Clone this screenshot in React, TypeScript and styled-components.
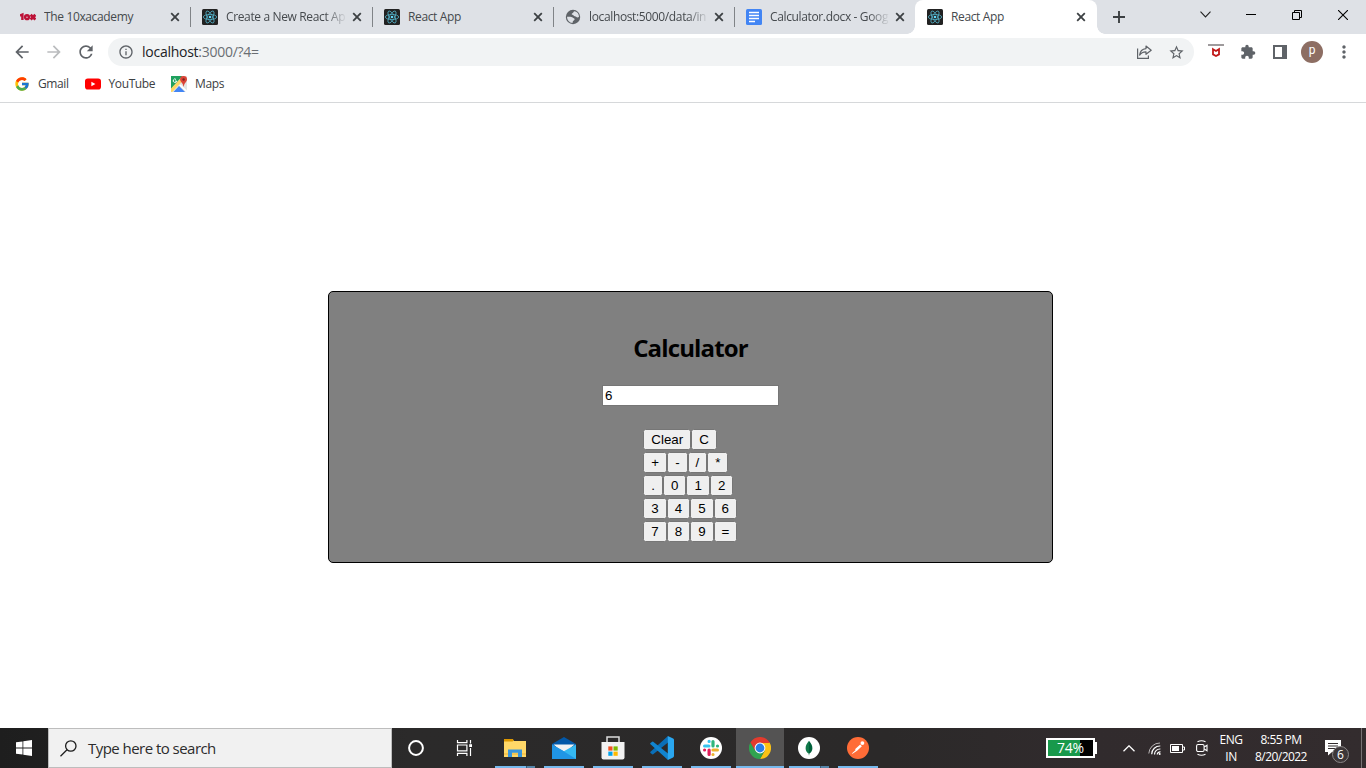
import React from "react";
import styled, { createGlobalStyle } from "styled-components";
import {
  MdArrowBack,
  MdArrowForward,
  MdRefresh,
  MdInfoOutline,
  MdStarBorder,
  MdExtension,
  MdMoreVert,
} from "react-icons/md";
import { FcGoogle } from "react-icons/fc";

const GlobalStyle = createGlobalStyle`
  * { box-sizing: border-box; }
  body {
    margin: 0;
    background: #fff;
    font-family: "Open Sans", "Noto Sans", sans-serif;
    overflow: hidden;
  }
  svg { display: block; flex: none; }
`;

const Screen = styled.div`
  width: 1366px;
  height: 768px;
  display: flex;
  flex-direction: column;
  background: #fff;
`;

/* ---------- browser chrome ---------- */

const TabStrip = styled.div`
  height: 34px;
  display: flex;
  background: #dee1e6;
  padding-left: 9px;
`;

const TabBox = styled.div<{ $width: number; $active?: boolean; $divider?: boolean }>`
  position: relative;
  width: ${(p) => p.$width}px;
  height: 34px;
  display: flex;
  align-items: center;
  margin-left: ${(p) => (p.$active ? -1 : 0)}px;
  padding: 0 11px 0 ${(p) => (p.$active ? 12 : 11)}px;
  background: ${(p) => (p.$active ? "#fff" : "transparent")};
  border-radius: 8px 8px 0 0;
  &::after {
    content: "";
    display: ${(p) => (p.$divider ? "block" : "none")};
    position: absolute;
    right: 0;
    top: 7px;
    width: 1px;
    height: 20px;
    background: #808387;
  }
`;

const TabFoot = styled.i<{ $side: "left" | "right" }>`
  position: absolute;
  bottom: 0;
  ${(p) => p.$side}: -8px;
  width: 8px;
  height: 8px;
  background: radial-gradient(
    circle at ${(p) => (p.$side === "left" ? "0 0" : "100% 0")},
    transparent 7.5px,
    #fff 8px
  );
`;

const TabTitle = styled.span<{ $fade?: boolean }>`
  flex: 1;
  margin: 0 5px 0 8px;
  overflow: hidden;
  white-space: nowrap;
  font-size: 12px;
  line-height: 18px;
  letter-spacing: -0.36px;
  color: #45494d;
  ${(p) => p.$fade && "mask-image: linear-gradient(90deg, #000 82%, transparent 100%);"}
`;

const NewTab = styled.div`
  width: 44px;
  display: flex;
  align-items: center;
  justify-content: center;
`;

const WindowControls = styled.div`
  margin-left: auto;
  height: 29px;
  display: flex;
`;

const ControlButton = styled.div`
  width: 46px;
  display: flex;
  align-items: center;
  justify-content: center;
`;

const Toolbar = styled.div`
  height: 36px;
  display: flex;
  align-items: center;
  padding-left: 6px;
`;

const ToolSlot = styled.div`
  width: 32px;
  display: flex;
  justify-content: center;
`;

const AddressBar = styled.div`
  width: 1086px;
  height: 28px;
  margin: 0 6px;
  display: flex;
  align-items: center;
  padding: 0 2px 0 10px;
  border-radius: 14px;
  background: #f1f3f4;
`;

const Url = styled.span`
  flex: 1;
  margin-left: 8px;
  font-size: 14px;
  line-height: 20px;
  letter-spacing: -0.26px;
  color: #6a6e73;
  b {
    font-weight: 400;
    color: #202124;
  }
`;

const Avatar = styled.div`
  width: 22px;
  height: 22px;
  border-radius: 50%;
  background: #8d6e63;
  color: #fff;
  font: 400 12px/19px Roboto, sans-serif;
  text-align: center;
`;

const BookmarkBar = styled.div`
  height: 33px;
  display: flex;
  align-items: center;
  padding: 0 14px 5px;
  gap: 16px;
  border-bottom: 1px solid #d6d8da;
`;

const Bookmark = styled.div`
  display: flex;
  align-items: center;
  gap: 8px;
  font-size: 12px;
  line-height: 18px;
  letter-spacing: -0.4px;
  color: #3c4043;
`;

/* ---------- calculator page ---------- */

const Page = styled.main`
  flex: 1;
  padding: 188px 0 0 328px;
`;

const Calculator = styled.section`
  width: 725px;
  height: 272px;
  border: 1px solid #000;
  border-radius: 5px;
  background: #808080;
  display: flex;
  flex-direction: column;
  align-items: center;
`;

const Heading = styled.h1`
  margin: 40px 0 21px;
  font-size: 24px;
  line-height: 32px;
  letter-spacing: -0.85px;
  font-weight: 700;
  color: #000;
`;

const Display = styled.input`
  width: 177px;
  height: 21px;
  margin: 0 0 23px;
  padding: 1px 2px;
  border: 1px solid #767676;
  background: #fff;
  color: #000;
  font: 13.333px "Liberation Sans", Arial, sans-serif;
`;

const Keypad = styled.div`
  width: 94.3px;
  display: flex;
  flex-direction: column;
  gap: 2px;
`;

const KeyRow = styled.div`
  display: flex;
`;

const Key = styled.button`
  height: 21px;
  font: 13.333px "Liberation Sans", Arial, sans-serif;
  color: #000;
`;

/* ---------- taskbar ---------- */

const Taskbar = styled.footer`
  height: 40px;
  display: flex;
  background: linear-gradient(90deg, #1e1e1e 0, #2b2a2a 30%, #2b2929 65%, #312b2d 80%, #332c2e 100%);
`;

const StartButton = styled.div`
  width: 48px;
  display: flex;
  align-items: center;
  justify-content: center;
`;

const SearchBox = styled.div`
  width: 344px;
  display: flex;
  align-items: center;
  padding-left: 11px;
  gap: 11px;
  border: 1px solid #bdbdbd;
  background: #f1f1f1;
  color: #2c2c2c;
  font-size: 15px;
  letter-spacing: -0.54px;
`;

const AppRow = styled.div`
  display: flex;
  & > :nth-child(3) {
    margin-left: 3px;
  }
`;

const AppSlot = styled.div<{ $active?: boolean; $gap?: boolean }>`
  width: 48px;
  margin-left: ${(p) => (p.$gap ? 1 : 0)}px;
  height: 40px;
  padding-top: 2px;
  display: flex;
  flex-direction: column;
  align-items: center;
  background: ${(p) => (p.$active ? "#545353" : "transparent")};
`;

const AppIcon = styled.div`
  flex: 1;
  display: flex;
  align-items: center;
`;

const Underline = styled.div<{ $kind: "none" | "single" | "multi" | "full" }>`
  height: 2px;
  width: ${(p) => (p.$kind === "full" ? 48 : 40)}px;
  background: ${(p) =>
    p.$kind === "none"
      ? "transparent"
      : p.$kind === "multi"
      ? "linear-gradient(90deg, #76b9ed 0 31px, #3c5c76 31px 32px, #5585a9 32px)"
      : "#76b9ed"};
`;

const Tray = styled.div`
  margin-left: auto;
  display: flex;
  align-items: center;
  color: #fff;
`;

const BatteryMeter = styled.div`
  width: 49px;
  height: 20px;
  border: 2px solid #fff;
  background: linear-gradient(90deg, #18994b 0 32px, #000 32px);
  font-size: 14px;
  line-height: 16px;
  letter-spacing: -0.2px;
  text-align: center;
`;

const BatteryTip = styled.div`
  width: 2px;
  height: 12px;
  background: #fff;
`;

const TrayIcon = styled.div<{ $left: number }>`
  margin-left: ${(p) => p.$left}px;
`;

const TrayText = styled.div<{ $width: number; $left: number; $spacing: number }>`
  width: ${(p) => p.$width}px;
  margin-left: ${(p) => p.$left}px;
  text-align: center;
  white-space: nowrap;
  font-size: 12px;
  line-height: 17px;
  letter-spacing: ${(p) => p.$spacing}px;
  padding-bottom: 1px;
`;

const Notification = styled.div`
  position: relative;
  width: 26px;
  height: 40px;
  margin-left: 17px;
  padding-top: 12px;
`;

const Badge = styled.span`
  position: absolute;
  left: 7px;
  top: 18px;
  width: 17px;
  height: 17px;
  border: 1px solid #8b8788;
  border-radius: 50%;
  background: #3d3739;
  font-size: 12px;
  line-height: 15px;
  text-align: center;
`;

const DesktopEdge = styled.div`
  width: 5px;
  height: 40px;
  margin-left: 10px;
  border-left: 1px solid #777274;
`;

/* ---------- icons ---------- */

const CloseIcon = () => (
  <svg width="10" height="10" viewBox="0 0 10 10">
    <path d="M1.2 1.2 8.8 8.8M8.8 1.2 1.2 8.8" stroke="#3c4043" strokeWidth="1.8" />
  </svg>
);

const ReactIcon = () => (
  <svg width="16" height="16" viewBox="0 0 32 32">
    <rect width="32" height="32" rx="3" fill="#222222" />
    <g fill="none" stroke="#50a9be" strokeWidth="1.7">
      <ellipse cx="16" cy="16" rx="13.4" ry="5.2" />
      <ellipse cx="16" cy="16" rx="13.4" ry="5.2" transform="rotate(60 16 16)" />
      <ellipse cx="16" cy="16" rx="13.4" ry="5.2" transform="rotate(120 16 16)" />
    </g>
    <circle cx="16" cy="16" r="2.6" fill="#61dafb" />
  </svg>
);

const GlobeIcon = () => (
  <svg width="16" height="16" viewBox="0 0 16 16">
    <circle cx="8" cy="8" r="7.2" fill="#5f6368" />
    <path
      d="M9.6 2.2C8.3 2.5 8.6 3.7 7.4 4.2 6.4 4.6 6.5 5.6 7.4 5.7 8.6 5.8 8.6 7.2 9.8 7.3 11 7.3 11.4 8.4 12.4 8.5L14 8A6 6 0 0 0 9.6 2.2"
      fill="#dee1e6"
    />
    <path
      d="M2 7.8C4 7.6 6.8 7.5 7.6 8.6 8.2 9.5 9.8 9.3 9.6 10.5 9.4 11.6 8 11.4 7.8 12.6L7.5 14A6 6 0 0 1 2 7.8"
      fill="#dee1e6"
    />
  </svg>
);

const AcademyIcon = () => (
  <svg width="16" height="16" viewBox="0 0 16 16" fill="none" stroke="#bd1238">
    <path d="M0 6.6 2.4 5.6V11" strokeWidth="2.4" />
    <circle cx="7" cy="8.2" r="1.9" strokeWidth="2.4" />
    <path d="M10.6 5.8 15.4 10.6M15.4 5.8 10.6 10.6" strokeWidth="2.8" />
  </svg>
);

const DocsIcon = () => (
  <svg width="16" height="16" viewBox="0 0 16 16">
    <rect width="16" height="16" rx="1.5" fill="#4285f4" />
    <path d="M3 4h10M3 7h10M3 10h10M3 13h6" transform="translate(0 -.5)" stroke="#fff" strokeWidth="1.5" />
  </svg>
);

const ShareIcon = () => (
  <svg width="16" height="16" viewBox="0 0 16 16" fill="none" stroke="#5f6368" strokeWidth="1.2">
    <path d="M1.6 4.5V14.4H12.4V11.5" />
    <path d="M10 2 15.2 6.2 10 10.3V7.8C7.2 7.7 5.1 8.7 3.6 11.1 4 7.6 6.1 5 10 4.6Z" strokeLinejoin="round" />
  </svg>
);

const McAfeeIcon = () => (
  <svg width="16" height="16" viewBox="0 0 16 16">
    <path d="M0 1h16" stroke="#9e9a9c" strokeWidth="2" />
    <path d="M5 5.2 8 7 11 5.2V10.4L8 12 5 10.4Z" fill="none" stroke="#c01818" strokeWidth="1.8" />
  </svg>
);

const SidePanelIcon = () => (
  <svg width="14" height="14" viewBox="0 0 14 14">
    <rect x="1" y="1" width="12" height="12" fill="none" stroke="#5f6368" strokeWidth="2" />
    <path d="M9 0h5v14H9z" fill="#5f6368" />
  </svg>
);

const YouTubeIcon = () => (
  <svg width="16" height="16" viewBox="0 0 16 16">
    <rect y="2.4" width="16" height="11.2" rx="2.8" fill="#f00" />
    <path d="M6.4 5.7v4.6L10.4 8z" fill="#fff" />
  </svg>
);

const MapsIcon = () => (
  <svg width="16" height="16" viewBox="0 0 16 16">
    <rect width="16" height="16" rx="1" fill="#e3e5e3" />
    <path d="M0 0h11.5L0 13z" fill="#1fa15e" />
    <path d="M2.5 16 8 10l6 6z" fill="#4285f4" />
    <path d="M11 1 0 12.5V16h1.2L12.5 4z" fill="#fdd663" />
    <path d="M8.3 9.6 15 16h1v-1.6L9.6 8.4z" fill="#fff" />
    <path d="M5 3.4A1.7 1.7 0 1 0 5.6 5H4.2" fill="none" stroke="#fff" />
    <path d="M12.6 0a3.4 3.4 0 0 0-3.5 3.5C9.1 6 12 6.6 12.4 10.5h.4C13.3 6.6 16 6 16 3.5A3.4 3.4 0 0 0 12.6 0" fill="#db4437" />
    <circle cx="12.6" cy="3.5" r="1.2" fill="#7b231e" />
  </svg>
);

const WindowsIcon = () => (
  <svg width="16" height="16" viewBox="0 0 16 16" fill="#fff">
    <path d="M0 2.3 6.5 1.4V7.5H0zM7.3 1.3 16 0v7.5H7.3zM0 8.4h6.5v6.2L0 13.7zM7.3 8.4H16V16l-8.7-1.3z" />
  </svg>
);

const SearchIcon = () => (
  <svg width="17" height="17" viewBox="0 0 17 17" fill="none" stroke="#1d1d1d" strokeWidth="1.3">
    <circle cx="10.8" cy="6" r="5.2" />
    <path d="M7 9.7.5 16.2" />
  </svg>
);

const CortanaIcon = () => (
  <svg width="16" height="16" viewBox="0 0 16 16">
    <circle cx="8" cy="8" r="6.9" fill="none" stroke="#fff" strokeWidth="2" />
  </svg>
);

const TaskViewIcon = () => (
  <svg width="17" height="16" viewBox="0 0 17 16" fill="none" stroke="#fff" strokeWidth="1.2">
    <path d="M1.5 0v2.6h9.4V0M1.5 16v-2.6h9.4V16M1.5 5h9.4v5.8H1.5zM14.5 0v3.5M14.5 8v8" />
    <path d="M13.2 4.2h2.8v2.8h-2.8z" fill="#fff" stroke="none" />
  </svg>
);

const ExplorerIcon = () => (
  <svg width="22" height="18" viewBox="0 0 22 18">
    <path d="M0 0h8.5l1.4 2H22v16H0z" fill="#ffd868" />
    <path d="M0 0h8.5l1.4 1.3L8.5 2.6H0z" fill="#dd9700" />
    <path d="M0 14h22v2H0z" fill="#f7c64f" />
    <path d="M4 18v-7.5h14V18h-4v-4.2H8V18z" fill="#3a96dc" />
  </svg>
);

const MailIcon = () => (
  <svg width="24" height="22" viewBox="0 0 24 22">
    <path d="M12 0 0 7v2h24V7z" fill="#0358a8" />
    <path d="M1.5 7.4h21L13 16h-2z" fill="#f3f3f3" />
    <path d="M0 7.5 12 14.3V22H0z" fill="#2095e5" />
    <path d="M24 7.5V22H0l9.5-6.5z" fill="#35b8f1" />
    <path d="m0 7.5 12 7L24 22H0z" fill="#2095e5" />
  </svg>
);

const StoreIcon = () => (
  <svg width="24" height="24" viewBox="0 0 24 24">
    <path d="M6 7V1h12v6" fill="none" stroke="#ddd" strokeWidth="1.5" />
    <path d="M0.5 6h23v15.5q0 2-2 2h-19q-2 0-2-2z" fill="#f2f2f2" />
    <path d="M7.3 10.4h4.2v4.2H7.3z" fill="#f25022" />
    <path d="M12.5 10.4h4.2v4.2h-4.2z" fill="#7fba00" />
    <path d="M7.3 15.6h4.2v4.2H7.3z" fill="#00a4ef" />
    <path d="M12.5 15.6h4.2v4.2h-4.2z" fill="#ffb900" />
  </svg>
);

const VsCodeIcon = () => (
  <svg width="24" height="24" viewBox="0 0 24 24">
    <path d="M0.5 15.8 18 0v6.5L3.2 18.2q-.7.5-1.3-.1l-1.4-1.2q-.6-.6 0-1.1" fill="#0a6fb8" />
    <path d="M.5 8.2 18 24v-6.5L3.2 5.8q-.7-.5-1.3.1L.5 7.1q-.6.6 0 1.1" fill="#1184cf" />
    <path d="m17.8 0 5.3 2.5q.9.5.9 1.4v16.2q0 .9-.9 1.4L17.8 24z" fill="#2aa7f0" />
  </svg>
);

const SlackIcon = () => (
  <svg width="22" height="22" viewBox="0 0 22 22" fill="none" strokeWidth="3.2" strokeLinecap="round">
    <circle cx="11" cy="11" r="11" fill="#fff" />
    <path d="M9.1 4.4h0M4.6 9h4.3" stroke="#36c5f0" />
    <path d="M17.5 9h0M13 4.5v4.4" stroke="#2eb67d" />
    <path d="M13 17.5h0M13 13h4.4" stroke="#ecb22e" />
    <path d="M4.6 13h0M9.1 13v4.5" stroke="#e01e5a" />
  </svg>
);

const ChromeIcon = () => (
  <svg width="22" height="22" viewBox="0 0 22 22">
    <path d="M20.53 5.5A11 11 0 0 1 11 22L15.8 13.5 11 5.5Z" fill="#fbc116" />
    <path d="M1.47 5.5A11 11 0 0 0 11 22L15.6 13.8 11 11 6.3 13.7Z" fill="#30a350" />
    <path d="M1.47 5.5A11 11 0 0 1 20.53 5.5V6H11L6.3 13.7Z" fill="#e33b2e" />
    <circle cx="11" cy="11" r="5.4" fill="#fff" />
    <circle cx="11" cy="11" r="4.4" fill="#2a7de9" />
  </svg>
);

const MongoIcon = () => (
  <svg width="22" height="22" viewBox="0 0 22 22">
    <circle cx="11" cy="11" r="11" fill="#fff" />
    <path d="M11 3.8C8.8 6.8 7.6 8.5 7.6 11.2c0 2.6 1.4 4.3 3 5.4l.4 2.1z" fill="#10794a" />
    <path d="M11 3.8c2.2 3 3.4 4.7 3.4 7.4 0 2.6-1.4 4.3-3 5.4l-.4 2.1z" fill="#00613b" />
  </svg>
);

const PostmanIcon = () => (
  <svg width="22" height="22" viewBox="0 0 22 22">
    <circle cx="11" cy="11" r="11" fill="#ff6c37" />
    <circle cx="15.4" cy="6.1" r="1.9" fill="#fff" />
    <path d="m13.2 7.5 1.7 1.7-4.8 4.6-4.6 3-.7-.2 3.9-3.5-.7-.8z" fill="#fff" />
  </svg>
);

const WifiIcon = () => (
  <svg width="13" height="13" viewBox="0 0 13 13" fill="none" stroke="#fff">
    <path d="M.8 11.5A11 11 0 0 1 12 1" stroke="#b9b5b6" />
    <path d="M3.7 12.2A8.3 8.3 0 0 1 12.3 4M6.5 12.4A5.5 5.5 0 0 1 12.4 7M9.2 12.5A3 3 0 0 1 12.5 9.8" strokeWidth="1.2" />
    <circle cx="11.7" cy="12" r="1" fill="#fff" stroke="none" />
  </svg>
);

const BatteryIcon = () => (
  <svg width="15" height="9" viewBox="0 0 15 9">
    <path d="M.5.5h12v8H.5zM13 3h1.5v3H13" fill="none" stroke="#fff" />
    <path d="M2 2h7v5H2z" fill="#fff" />
  </svg>
);

const MeetIcon = () => (
  <svg width="12" height="16" viewBox="0 0 12 16" fill="none" stroke="#fff" strokeWidth="1.1">
    <rect x=".6" y="4.5" width="7.5" height="7" rx="1.5" />
    <path d="M8.2 7 11 5.3v5.4L8.2 9M1.5 1.8q4-2 8 0M1.5 14.2q4 2 8 0" />
  </svg>
);

/* ---------- data ---------- */

const tabs = [
  { title: "The 10xacademy", icon: <AcademyIcon />, width: 182 },
  { title: "Create a New React Ap", icon: <ReactIcon />, width: 182, fade: true },
  { title: "React App", icon: <ReactIcon />, width: 181 },
  { title: "localhost:5000/data/in", icon: <GlobeIcon />, width: 181, fade: true },
  { title: "Calculator.docx - Goog", icon: <DocsIcon />, width: 181, fade: true },
  { title: "React App", icon: <ReactIcon />, width: 182 },
];

const keyRows = [
  ["Clear", "C"],
  ["+", "-", "/", "*"],
  [".", "0", "1", "2"],
  ["3", "4", "5", "6"],
  ["7", "8", "9", "="],
];

type AppEntry = { icon: React.ReactNode; line: "none" | "single" | "multi" | "full" };

const apps: AppEntry[] = [
  { icon: <CortanaIcon />, line: "none" },
  { icon: <TaskViewIcon />, line: "none" },
  { icon: <ExplorerIcon />, line: "multi" },
  { icon: <MailIcon />, line: "single" },
  { icon: <StoreIcon />, line: "single" },
  { icon: <VsCodeIcon />, line: "single" },
  { icon: <SlackIcon />, line: "single" },
  { icon: <ChromeIcon />, line: "full" },
  { icon: <MongoIcon />, line: "multi" },
  { icon: <PostmanIcon />, line: "single" },
];

export default function App() {
  return (
    <Screen>
      <GlobalStyle />
      <TabStrip>
        {tabs.map((tab, i) => {
          const active = i === tabs.length - 1;
          return (
            <TabBox key={i} $width={tab.width} $active={active} $divider={i < tabs.length - 2}>
              {active && <TabFoot $side="left" />}
              {tab.icon}
              <TabTitle $fade={tab.fade}>{tab.title}</TabTitle>
              <CloseIcon />
              {active && <TabFoot $side="right" />}
            </TabBox>
          );
        })}
        <NewTab>
          <svg width="12" height="12" viewBox="0 0 12 12">
            <path d="M6 0v12M0 6h12" stroke="#3c4043" strokeWidth="1.9" />
          </svg>
        </NewTab>
        <WindowControls>
          <ControlButton>
            <svg width="11" height="7" viewBox="0 0 11 7">
              <path d="M.5.7 5.5 5.9 10.5.7" fill="none" stroke="#222" strokeWidth="1.1" />
            </svg>
          </ControlButton>
          <ControlButton>
            <svg width="10" height="1" viewBox="0 0 10 1">
              <path d="M0 0h10v1H0z" fill="#000" />
            </svg>
          </ControlButton>
          <ControlButton>
            <svg width="10" height="10" viewBox="0 0 10 10">
              <path d="M.5 2.5h7v7h-7zM2.5 2.5v-2h7v7h-2" fill="none" stroke="#000" />
            </svg>
          </ControlButton>
          <ControlButton>
            <svg width="10" height="10" viewBox="0 0 10 10">
              <path d="M0 0 10 10M10 0 0 10" stroke="#000" strokeWidth="1.1" />
            </svg>
          </ControlButton>
        </WindowControls>
      </TabStrip>

      <Toolbar>
        <ToolSlot>
          <MdArrowBack size={20} color="#5f6368" />
        </ToolSlot>
        <ToolSlot>
          <MdArrowForward size={20} color="#babcbe" />
        </ToolSlot>
        <ToolSlot>
          <MdRefresh size={20} color="#5f6368" />
        </ToolSlot>
        <AddressBar>
          <MdInfoOutline size={16} color="#5f6368" />
          <Url>
            <b>localhost</b>:3000/?4=
          </Url>
          <ToolSlot>
            <ShareIcon />
          </ToolSlot>
          <ToolSlot>
            <MdStarBorder size={17} color="#5f6368" />
          </ToolSlot>
        </AddressBar>
        <ToolSlot>
          <McAfeeIcon />
        </ToolSlot>
        <ToolSlot>
          <MdExtension size={16} color="#5f6368" />
        </ToolSlot>
        <ToolSlot>
          <SidePanelIcon />
        </ToolSlot>
        <ToolSlot>
          <Avatar>p</Avatar>
        </ToolSlot>
        <ToolSlot>
          <MdMoreVert size={20} color="#5f6368" />
        </ToolSlot>
      </Toolbar>

      <BookmarkBar>
        <Bookmark>
          <FcGoogle size={16} />
          Gmail
        </Bookmark>
        <Bookmark>
          <YouTubeIcon />
          YouTube
        </Bookmark>
        <Bookmark>
          <MapsIcon />
          Maps
        </Bookmark>
      </BookmarkBar>

      <Page>
        <Calculator>
          <Heading>Calculator</Heading>
          <Display defaultValue="6" />
          <Keypad>
            {keyRows.map((row) => (
              <KeyRow key={row[0]}>
                {row.map((label) => (
                  <Key key={label}>{label}</Key>
                ))}
              </KeyRow>
            ))}
          </Keypad>
        </Calculator>
      </Page>

      <Taskbar>
        <StartButton>
          <WindowsIcon />
        </StartButton>
        <SearchBox>
          <SearchIcon />
          Type here to search
        </SearchBox>
        <AppRow>
          {apps.map((app, i) => (
            <AppSlot key={i} $active={app.line === "full"} $gap={i > 2}>
              <AppIcon>{app.icon}</AppIcon>
              <Underline $kind={app.line} />
            </AppSlot>
          ))}
        </AppRow>
        <Tray>
          <BatteryMeter>74%</BatteryMeter>
          <BatteryTip />
          <TrayIcon $left={26}>
            <svg width="12" height="7" viewBox="0 0 12 7">
              <path d="M.5 6.2 6 .8l5.5 5.4" fill="none" stroke="#fff" strokeWidth="1.3" />
            </svg>
          </TrayIcon>
          <TrayIcon $left={13}>
            <WifiIcon />
          </TrayIcon>
          <TrayIcon $left={9}>
            <BatteryIcon />
          </TrayIcon>
          <TrayIcon $left={11}>
            <MeetIcon />
          </TrayIcon>
          <TrayText $width={24} $left={11} $spacing={-0.45}>
            ENG
            <br />
            IN
          </TrayText>
          <TrayText $width={54} $left={11} $spacing={-0.55}>
            8:55 PM
            <br />
            8/20/2022
          </TrayText>
          <Notification>
            <svg width="16" height="16" viewBox="0 0 16 16">
              <path d="M0 0h16v12H7l-4 3.5V12H0z" fill="#fff" />
              <path d="M3 3.5h10M3 6h10M3 8.5h8" stroke="#332c2e" />
            </svg>
            <Badge>6</Badge>
          </Notification>
          <DesktopEdge />
        </Tray>
      </Taskbar>
    </Screen>
  );
}
